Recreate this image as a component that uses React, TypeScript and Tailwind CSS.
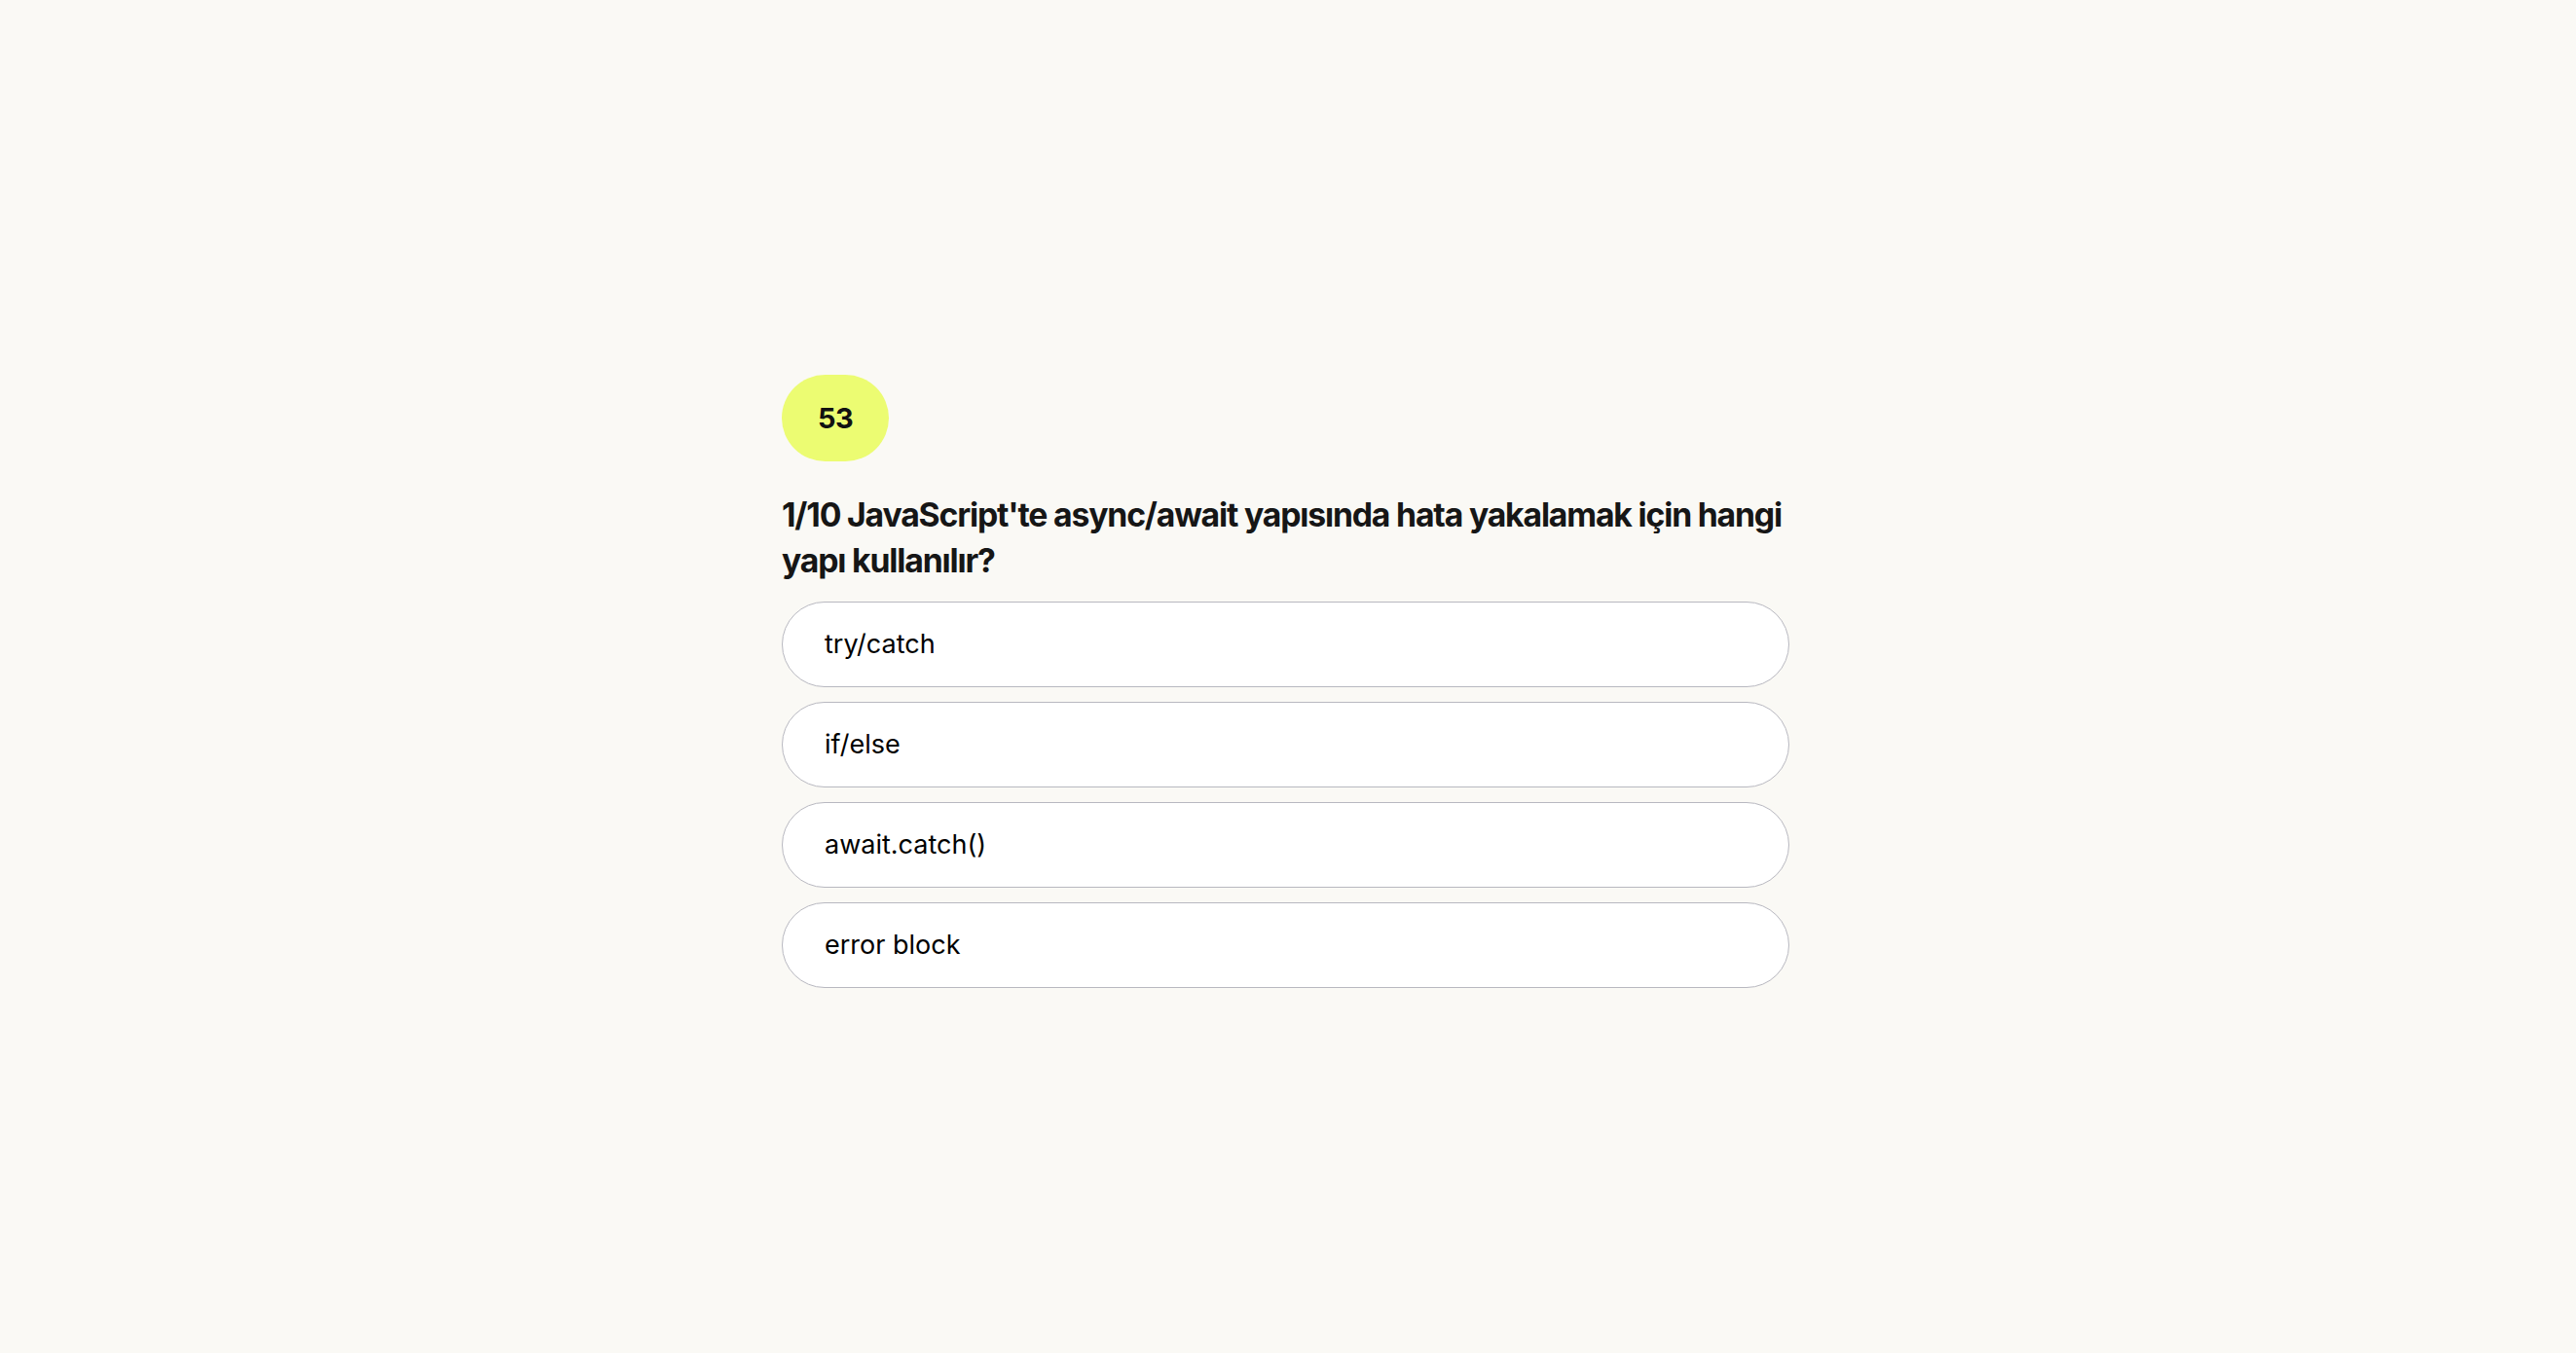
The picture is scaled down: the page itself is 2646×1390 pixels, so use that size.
import { useState } from "react"

const options = ["try/catch", "if/else", "await.catch()", "error block"]

export default function App() {
    const [picked, setPicked] = useState<number | null>(null)

    return (
        <div className="min-h-screen w-full bg-[#faf9f5] font-['Inter',sans-serif] text-[#111111] pr-[5px]">
            <div className="w-[1035px] mx-auto pt-[385px] pb-20">
                <div className="w-[110px] h-[89px] rounded-full bg-[#ecfc72] flex items-center justify-center text-[29px] font-bold tracking-[-0.02em]">
                    53
                </div>
                <h1 className="mt-[31px] text-[33.75px] leading-[47.25px] font-bold text-[#161616] tracking-[-0.035em]">
                    1/10 JavaScript'te async/await yapısında hata yakalamak için hangi yapı kullanılır?
                </h1>
                <div className="mt-[18px] flex flex-col gap-[15px]">
                    {options.map((opt, i) => (
                        <button
                            key={opt}
                            onClick={() => setPicked(i)}
                            className={`w-full h-[88px] rounded-full border text-left pl-[43px] pt-[2px] text-[27px] text-black bg-white ${picked === i ? "border-[#8a8a94]" : "border-[#b8b8c0]"}`}
                        >
                            {opt}
                        </button>
                    ))}
                </div>
            </div>
        </div>
    )
}
